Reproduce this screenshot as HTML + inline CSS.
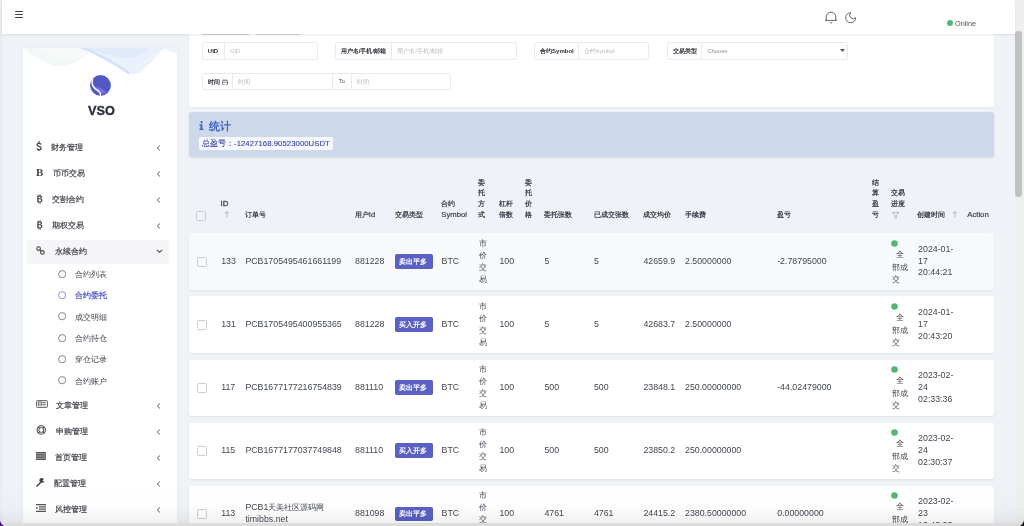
<!DOCTYPE html>
<html><head><meta charset="utf-8"><style>
html,body{margin:0;padding:0}
body{width:1024px;height:526px;overflow:hidden;position:relative;background:#eff2f6;font-family:'Liberation Sans', sans-serif}
.t{position:absolute;white-space:nowrap}
.b{position:absolute}
#root{position:absolute;left:0;top:0;width:1024px;height:526px;will-change:transform}
</style></head><body><div id="root">
<div class="b" style="left:0.00px;top:0.00px;width:2.00px;height:526.00px;background:#eaecef"></div>
<div class="b" style="left:2.00px;top:0.00px;width:1013.00px;height:34.00px;background:#fff;box-shadow:0 1px 2px rgba(30,40,60,0.10);z-index:5"></div>
<div class="b" style="left:14.90px;top:10.90px;width:8.30px;height:1.40px;background:#3c3c3c;border-radius:0.7px;z-index:6"></div>
<div class="b" style="left:14.90px;top:13.80px;width:8.30px;height:1.40px;background:#3c3c3c;border-radius:0.7px;z-index:6"></div>
<div class="b" style="left:14.90px;top:16.70px;width:8.30px;height:1.40px;background:#3c3c3c;border-radius:0.7px;z-index:6"></div>
<svg class="b" style="left:824px;top:11px;z-index:6" width="14" height="14" viewBox="0 0 14 14">
<path d="M2.2 9.4 V6 A4.8 4.8 0 0 1 11.8 6 V9.4" fill="none" stroke="#555" stroke-width="0.9"/>
<path d="M1 9.4 H13" stroke="#555" stroke-width="0.9"/>
<path d="M5.7 11.1 Q7 13.3 8.3 11.1" fill="none" stroke="#555" stroke-width="0.85"/>
</svg>
<svg class="b" style="left:844.3px;top:11.1px;z-index:6" width="13.4" height="13.4" viewBox="0 0 24 24">
<path d="M12 3a6 6 0 0 0 9 9 9 9 0 1 1-9-9Z" fill="none" stroke="#555" stroke-width="1.6" stroke-linejoin="round"/>
</svg>
<svg class="b" style="left:947px;top:20px;z-index:6" width="6" height="6" viewBox="0 0 6 6"><circle cx="3" cy="3" r="3" fill="#52b575"/></svg>
<div class="t" style="left:955.00px;top:18.65px;font-size:7.3px;line-height:9.49px;color:#555;font-weight:normal;z-index:6">Online</div>
<div class="b" style="left:1015.00px;top:0.00px;width:9.00px;height:526.00px;background:#efefef"></div>
<div class="b" style="left:1015.00px;top:30.80px;width:6.50px;height:166.70px;background:#c1c1c1;border-radius:3.2px"></div>
<div class="b" style="left:23.25px;top:48.00px;width:153.75px;height:490.00px;background:#fff;box-shadow:0 0 2px rgba(30,40,60,0.06)"></div>
<svg class="b" style="left:23px;top:48px" width="154" height="30" viewBox="0 0 154 30">
<defs><filter id="wb" x="-5%" y="-20%" width="110%" height="140%"><feGaussianBlur stdDeviation="0.7"/></filter><clipPath id="wc"><rect x="0" y="0" width="154" height="30"/></clipPath></defs>
<g clip-path="url(#wc)"><g filter="url(#wb)">
<path d="M-2 -2 C10 8 22 16 33 18 C45 19 55 14 66 5 L70 -2 Z" fill="#f1f8f6"/>
<path d="M15 0 C25 7 35 12 45 12 C55 12 62 7 68 0 Z" fill="#f6faf9"/>
<path d="M54 -2 C74 6 92 16 104 24 C108 26.5 112 27 116 24.5 C125 18 134 8 143 -2 Z" fill="#eaf1fc"/>
<path d="M58 -2 C76 4 90 9 102 10 C112 11 121 6 130 -2 Z" fill="#dde8f9" opacity="0.8"/>
<path d="M58 -1 C76 6 94 17 106.5 25.5" fill="none" stroke="#d3e2f8" stroke-width="2.6"/>
<path d="M112 21 C122 14 131 8 139 2" fill="none" stroke="#f9fbff" stroke-width="0.9"/>
<path d="M136 -2 C145 3 150 5 156 6 V-2 Z" fill="#eef4fc"/>
</g></g>
</svg>
<svg class="b" style="left:89.6px;top:74.6px" width="21" height="21" viewBox="0 0 21 21">
<circle cx="10.5" cy="10.5" r="10.4" fill="#5159c3"/>
<path d="M4 12 C7.5 12.2 12.5 12.8 16 17.6 C14.5 18.4 13 18.8 11.5 19 C10.5 16.5 8 15 4.6 14 Z" fill="#7d6ff0"/>
<path d="M2.6 4.3 C1.6 7.5 2.2 11 4.8 13.4 C7.4 15.6 10.8 16.3 10.4 20.2" fill="none" stroke="#fff" stroke-width="1.5" stroke-linecap="round"/>
</svg>
<div class="t" style="left:88.00px;top:102.95px;font-size:12.7px;line-height:16.51px;color:#2b303b;font-weight:bold;-webkit-text-stroke:0.35px #2b303b;letter-spacing:0.1px">VSO</div>
<svg class="b" style="left:36.3px;top:141px" width="6" height="10.4" viewBox="0 0 6 10.4"><path d="M4.9 3.4 C4.6 2.7 3.9 2.3 3 2.3 C1.8 2.3 1 2.9 1 3.8 C1 4.8 1.9 5.1 3 5.4 C4.2 5.7 5.1 6.1 5.1 7.2 C5.1 8.2 4.2 8.8 3 8.8 C2 8.8 1.2 8.4 0.9 7.6" fill="none" stroke="#444" stroke-width="1.3"/><path d="M3 0.1 V2.6 M3 8.5 V10.2" stroke="#444" stroke-width="1.1"/></svg>
<div class="t" style="left:50.60px;top:141.90px;font-size:8.3px;line-height:10.79px;color:#42454d;font-weight:normal;-webkit-text-stroke:0.2px #42454d">财务管理</div>
<svg class="b" style="left:156.1px;top:145.30px" width="5" height="6" viewBox="0 0 5 6"><path d="M3.9 0.6 L1.2 3 L3.9 5.4" fill="none" stroke="#555" stroke-width="0.95"/></svg>
<div class="t" style="left:36.0px;top:165.25px;font-size:11px;line-height:14.30px;color:#444;font-weight:bold;font-family:'Liberation Serif', serif">B</div>
<div class="t" style="left:53.00px;top:167.90px;font-size:8.3px;line-height:10.79px;color:#42454d;font-weight:normal;-webkit-text-stroke:0.2px #42454d">币币交易</div>
<svg class="b" style="left:156.1px;top:171.30px" width="5" height="6" viewBox="0 0 5 6"><path d="M3.9 0.6 L1.2 3 L3.9 5.4" fill="none" stroke="#555" stroke-width="0.95"/></svg>
<svg class="b" style="left:36.4px;top:194.3px" width="7" height="10" viewBox="0 0 7 10">
<path d="M1.2 1.6 H4.3 C5.6 1.6 6 2.4 6 3.1 C6 3.9 5.5 4.4 4.8 4.6 C5.8 4.8 6.4 5.4 6.4 6.3 C6.4 7.4 5.6 8.3 4.3 8.3 H1.2 Z M2.6 2.7 V4.2 H4 C4.5 4.2 4.7 3.9 4.7 3.45 C4.7 3 4.5 2.7 4 2.7 Z M2.6 5.2 V7.2 H4.2 C4.8 7.2 5.1 6.8 5.1 6.2 C5.1 5.6 4.8 5.2 4.2 5.2 Z" fill="#4a4a4a" fill-rule="evenodd"/>
<path d="M2.9 0.3 V1.8 M4.3 0.3 V1.8 M2.9 8.1 V9.7 M4.3 8.1 V9.7" stroke="#4a4a4a" stroke-width="0.8"/></svg>
<div class="t" style="left:52.00px;top:194.00px;font-size:8.3px;line-height:10.79px;color:#42454d;font-weight:normal;-webkit-text-stroke:0.2px #42454d">交割合约</div>
<svg class="b" style="left:156.1px;top:197.40px" width="5" height="6" viewBox="0 0 5 6"><path d="M3.9 0.6 L1.2 3 L3.9 5.4" fill="none" stroke="#555" stroke-width="0.95"/></svg>
<svg class="b" style="left:36.4px;top:220.3px" width="7" height="10" viewBox="0 0 7 10">
<path d="M1.2 1.6 H4.3 C5.6 1.6 6 2.4 6 3.1 C6 3.9 5.5 4.4 4.8 4.6 C5.8 4.8 6.4 5.4 6.4 6.3 C6.4 7.4 5.6 8.3 4.3 8.3 H1.2 Z M2.6 2.7 V4.2 H4 C4.5 4.2 4.7 3.9 4.7 3.45 C4.7 3 4.5 2.7 4 2.7 Z M2.6 5.2 V7.2 H4.2 C4.8 7.2 5.1 6.8 5.1 6.2 C5.1 5.6 4.8 5.2 4.2 5.2 Z" fill="#4a4a4a" fill-rule="evenodd"/>
<path d="M2.9 0.3 V1.8 M4.3 0.3 V1.8 M2.9 8.1 V9.7 M4.3 8.1 V9.7" stroke="#4a4a4a" stroke-width="0.8"/></svg>
<div class="t" style="left:52.00px;top:220.00px;font-size:8.3px;line-height:10.79px;color:#42454d;font-weight:normal;-webkit-text-stroke:0.2px #42454d">期权交易</div>
<svg class="b" style="left:156.1px;top:223.40px" width="5" height="6" viewBox="0 0 5 6"><path d="M3.9 0.6 L1.2 3 L3.9 5.4" fill="none" stroke="#555" stroke-width="0.95"/></svg>
<div class="b" style="left:27.00px;top:239.50px;width:142.00px;height:24.00px;background:#f5f5f8;border-radius:2px"></div>
<svg class="b" style="left:35.8px;top:245.8px" width="9" height="9" viewBox="0 0 9 9">
<circle cx="2.6" cy="2.6" r="1.8" fill="none" stroke="#444" stroke-width="1.1"/>
<circle cx="6.4" cy="6.4" r="1.8" fill="none" stroke="#444" stroke-width="1.1"/>
<path d="M3.8 3.8 L5.2 5.2" stroke="#444" stroke-width="1.1"/></svg>
<div class="t" style="left:54.50px;top:246.10px;font-size:8.3px;line-height:10.79px;color:#42454d;font-weight:normal;-webkit-text-stroke:0.2px #42454d">永续合约</div>
<svg class="b" style="left:155.5px;top:249.30px" width="7" height="4" viewBox="0 0 7 4"><path d="M0.8 0.8 L3.5 3.2 L6.2 0.8" fill="none" stroke="#555" stroke-width="1.1"/></svg>
<svg class="b" style="left:58.1px;top:269.70px" width="8.4" height="8.4" viewBox="0 0 8.4 8.4"><circle cx="4.2" cy="4.2" r="3.6" fill="none" stroke="#666a72" stroke-width="0.8"/></svg>
<div class="t" style="left:75.30px;top:269.01px;font-size:8.3px;line-height:10.79px;color:#42454d;font-weight:normal;">合约列表</div>
<svg class="b" style="left:58.1px;top:291.00px" width="8.4" height="8.4" viewBox="0 0 8.4 8.4"><circle cx="4.2" cy="4.2" r="3.6" fill="none" stroke="#6f74c9" stroke-width="0.8"/></svg>
<div class="t" style="left:75.30px;top:290.31px;font-size:8.3px;line-height:10.79px;color:#5b62c8;font-weight:bold;">合约委托</div>
<svg class="b" style="left:58.1px;top:312.30px" width="8.4" height="8.4" viewBox="0 0 8.4 8.4"><circle cx="4.2" cy="4.2" r="3.6" fill="none" stroke="#666a72" stroke-width="0.8"/></svg>
<div class="t" style="left:75.30px;top:311.61px;font-size:8.3px;line-height:10.79px;color:#42454d;font-weight:normal;">成交明细</div>
<svg class="b" style="left:58.1px;top:333.60px" width="8.4" height="8.4" viewBox="0 0 8.4 8.4"><circle cx="4.2" cy="4.2" r="3.6" fill="none" stroke="#666a72" stroke-width="0.8"/></svg>
<div class="t" style="left:75.30px;top:332.91px;font-size:8.3px;line-height:10.79px;color:#42454d;font-weight:normal;">合约持仓</div>
<svg class="b" style="left:58.1px;top:354.90px" width="8.4" height="8.4" viewBox="0 0 8.4 8.4"><circle cx="4.2" cy="4.2" r="3.6" fill="none" stroke="#666a72" stroke-width="0.8"/></svg>
<div class="t" style="left:75.30px;top:354.21px;font-size:8.3px;line-height:10.79px;color:#42454d;font-weight:normal;">穿仓记录</div>
<svg class="b" style="left:58.1px;top:376.20px" width="8.4" height="8.4" viewBox="0 0 8.4 8.4"><circle cx="4.2" cy="4.2" r="3.6" fill="none" stroke="#666a72" stroke-width="0.8"/></svg>
<div class="t" style="left:75.30px;top:375.51px;font-size:8.3px;line-height:10.79px;color:#42454d;font-weight:normal;">合约账户</div>
<svg class="b" style="left:36px;top:400px" width="12" height="8" viewBox="0 0 12 8">
<rect x="0.5" y="0.5" width="11" height="7" rx="1" fill="#ddd" stroke="#666" stroke-width="0.9"/>
<rect x="2.5" y="2" width="3" height="3" fill="none" stroke="#666" stroke-width="0.8"/>
<path d="M6.5 2.5 H9.5 M6.5 4.5 H9.5" stroke="#666" stroke-width="0.8"/></svg>
<div class="t" style="left:56.30px;top:399.81px;font-size:8.3px;line-height:10.79px;color:#42454d;font-weight:normal;-webkit-text-stroke:0.2px #42454d">文章管理</div>
<svg class="b" style="left:156.1px;top:403.20px" width="5" height="6" viewBox="0 0 5 6"><path d="M3.9 0.6 L1.2 3 L3.9 5.4" fill="none" stroke="#555" stroke-width="0.95"/></svg>
<svg class="b" style="left:36px;top:425px" width="10.5" height="10" viewBox="0 0 10 10">
<circle cx="5" cy="5" r="4.2" fill="none" stroke="#444" stroke-width="1.1"/>
<circle cx="5" cy="5" r="2.4" fill="none" stroke="#444" stroke-width="0.9"/>
<path d="M2 2 L3.3 3.3 M8 2 L6.7 3.3 M2 8 L3.3 6.7 M8 8 L6.7 6.7" stroke="#444" stroke-width="1.2"/></svg>
<div class="t" style="left:55.80px;top:425.81px;font-size:8.3px;line-height:10.79px;color:#42454d;font-weight:normal;-webkit-text-stroke:0.2px #42454d">申购管理</div>
<svg class="b" style="left:156.1px;top:429.20px" width="5" height="6" viewBox="0 0 5 6"><path d="M3.9 0.6 L1.2 3 L3.9 5.4" fill="none" stroke="#555" stroke-width="0.95"/></svg>
<svg class="b" style="left:36px;top:452px" width="10" height="8" viewBox="0 0 10 8">
<rect x="0" y="0" width="10" height="8" fill="#aaa"/>
<path d="M0 0.7 H10 M0 2.9 H10 M0 5.1 H10 M0 7.3 H10" stroke="#555" stroke-width="1.3"/></svg>
<div class="t" style="left:55.40px;top:451.81px;font-size:8.3px;line-height:10.79px;color:#42454d;font-weight:normal;-webkit-text-stroke:0.2px #42454d">首页管理</div>
<svg class="b" style="left:156.1px;top:455.20px" width="5" height="6" viewBox="0 0 5 6"><path d="M3.9 0.6 L1.2 3 L3.9 5.4" fill="none" stroke="#555" stroke-width="0.95"/></svg>
<svg class="b" style="left:36.4px;top:478px" width="9" height="9" viewBox="0 0 9 9">
<path d="M1 8 L5 4" stroke="#444" stroke-width="1.6" stroke-linecap="round"/>
<path d="M5.2 4.5 A2.3 2.3 0 1 1 7.8 1.5 L6.6 2.6 L6.8 3.3 L7.5 3.5 L8.6 2.4 A2.3 2.3 0 0 1 5.2 4.5Z" fill="#444"/></svg>
<div class="t" style="left:54.00px;top:477.81px;font-size:8.3px;line-height:10.79px;color:#42454d;font-weight:normal;-webkit-text-stroke:0.2px #42454d">配置管理</div>
<svg class="b" style="left:156.1px;top:481.20px" width="5" height="6" viewBox="0 0 5 6"><path d="M3.9 0.6 L1.2 3 L3.9 5.4" fill="none" stroke="#555" stroke-width="0.95"/></svg>
<svg class="b" style="left:36px;top:504px" width="10" height="8" viewBox="0 0 10 8">
<path d="M0 0.6 H10 M3 2.9 H10 M3 5.1 H10 M0 7.4 H10" stroke="#555" stroke-width="1.1"/>
<path d="M0.3 2.6 L2 4 L0.3 5.4 Z" fill="#555"/></svg>
<div class="t" style="left:55.25px;top:503.81px;font-size:8.3px;line-height:10.79px;color:#42454d;font-weight:normal;-webkit-text-stroke:0.2px #42454d">风控管理</div>
<svg class="b" style="left:156.1px;top:507.20px" width="5" height="6" viewBox="0 0 5 6"><path d="M3.9 0.6 L1.2 3 L3.9 5.4" fill="none" stroke="#555" stroke-width="0.95"/></svg>
<div class="b" style="left:189.00px;top:0.00px;width:805.00px;height:107.30px;background:#fff;border-radius:0 0 3px 3px;box-shadow:0 1px 2px rgba(30,40,60,0.05)"></div>
<div class="b" style="left:202.30px;top:33.70px;width:47.00px;height:1.30px;background:#cbcde6;z-index:4;box-shadow:0 0 1px #d5d7ea"></div>
<div class="b" style="left:255.60px;top:33.80px;width:45.00px;height:1.20px;background:#d6d7da;z-index:4;box-shadow:0 0 1px #dddee0"></div>
<div class="b" style="left:201.5px;top:42.2px;width:116px;height:17.6px;border:0.8px solid #e6eaef;border-radius:2.5px;box-sizing:border-box;background:#fff"></div>
<div class="t" style="left:207.80px;top:48.00px;font-size:6.0px;line-height:7.80px;color:#2d3038;font-weight:bold;">UID</div>
<div class="b" style="left:224.10px;top:42.20px;width:0.80px;height:17.60px;background:#e6eaef"></div>
<div class="t" style="left:230.30px;top:48.13px;font-size:5.8px;line-height:7.54px;color:#b4b8bf;font-weight:normal;">UID</div>
<div class="b" style="left:334.5px;top:42.2px;width:182px;height:17.6px;border:0.8px solid #e6eaef;border-radius:2.5px;box-sizing:border-box;background:#fff"></div>
<div class="t" style="left:340.80px;top:48.00px;font-size:6.0px;line-height:7.80px;color:#2d3038;font-weight:bold;">用户名/手机/邮箱</div>
<div class="b" style="left:391.10px;top:42.20px;width:0.80px;height:17.60px;background:#e6eaef"></div>
<div class="t" style="left:397.30px;top:48.13px;font-size:5.8px;line-height:7.54px;color:#b4b8bf;font-weight:normal;">用户名/手机/邮箱</div>
<div class="b" style="left:533.75px;top:42.2px;width:115.5px;height:17.6px;border:0.8px solid #e6eaef;border-radius:2.5px;box-sizing:border-box;background:#fff"></div>
<div class="t" style="left:540.05px;top:48.00px;font-size:6.0px;line-height:7.80px;color:#2d3038;font-weight:bold;">合约Symbol</div>
<div class="b" style="left:578.05px;top:42.20px;width:0.80px;height:17.60px;background:#e6eaef"></div>
<div class="t" style="left:584.25px;top:48.13px;font-size:5.8px;line-height:7.54px;color:#b4b8bf;font-weight:normal;">合约symbol</div>
<div class="b" style="left:666.6px;top:42.2px;width:181.9px;height:17.6px;border:0.8px solid #e6eaef;border-radius:2.5px;box-sizing:border-box;background:#fff"></div>
<div class="t" style="left:672.90px;top:48.00px;font-size:6.0px;line-height:7.80px;color:#2d3038;font-weight:bold;">交易类型</div>
<div class="b" style="left:701.20px;top:42.20px;width:0.80px;height:17.60px;background:#e6eaef"></div>
<div class="t" style="left:707.40px;top:48.03px;font-size:5.8px;line-height:7.54px;color:#8d9198;font-weight:normal;">Choose</div>
<svg class="b" style="left:839.8px;top:49px" width="5" height="3" viewBox="0 0 5 3"><path d="M0 0 H5 L2.5 3Z" fill="#555"/></svg>
<div class="b" style="left:201.5px;top:73.2px;width:249px;height:17.3px;border:0.8px solid #e6eaef;border-radius:2.5px;box-sizing:border-box;background:#fff"></div>
<div class="t" style="left:207.80px;top:78.85px;font-size:6.0px;line-height:7.80px;color:#2d3038;font-weight:bold;">时间</div>
<div class="b" style="left:232.10px;top:73.20px;width:0.80px;height:17.30px;background:#e6eaef"></div>
<div class="t" style="left:238.30px;top:78.98px;font-size:5.8px;line-height:7.54px;color:#b4b8bf;font-weight:normal;">时间</div>
<div class="b" style="left:332.10px;top:73.20px;width:0.80px;height:17.30px;background:#e6eaef"></div>
<div class="b" style="left:350.60px;top:73.20px;width:0.80px;height:17.30px;background:#e6eaef"></div>
<div class="t" style="left:356.80px;top:78.98px;font-size:5.8px;line-height:7.54px;color:#b4b8bf;font-weight:normal;">时间</div>
<div class="t" style="left:338.50px;top:78.10px;font-size:6.0px;line-height:7.80px;color:#555;font-weight:normal;">To</div>
<svg class="b" style="left:221.5px;top:78.6px" width="6" height="6.5" viewBox="0 0 6 6.5"><rect x="0.5" y="1.3" width="5" height="4.7" rx="0.8" fill="none" stroke="#666" stroke-width="0.8"/><path d="M0.5 3.2 H5.5 M1.8 0.3 V1.8 M4.2 0.3 V1.8" stroke="#666" stroke-width="0.7"/></svg>
<div class="b" style="left:189.00px;top:112.30px;width:805.00px;height:44.70px;background:#cdd8eb;border-radius:3px;box-shadow:0 1px 2px rgba(30,40,80,0.12)"></div>
<svg class="b" style="left:198.6px;top:121px" width="5" height="9" viewBox="0 0 5 9"><circle cx="2.6" cy="1.2" r="1.15" fill="#3f62c0"/><path d="M0.4 3.2 H3.4 V7.7 H4.5 V8.9 H0.4 V7.7 H1.5 V4.4 H0.4 Z" fill="#3f62c0"/></svg>
<div class="t" style="left:209.00px;top:118.68px;font-size:10.8px;line-height:14.04px;color:#4466c4;font-weight:bold;">统计</div>
<div class="b" style="left:198.80px;top:137.00px;width:134.20px;height:13.10px;background:#f7f8fc;border-radius:2px"></div>
<div class="t" style="left:202.00px;top:138.56px;font-size:7.75px;line-height:10.08px;color:#3644a8;font-weight:normal;-webkit-text-stroke:0.1px #3644a8">总盈亏：<span style="letter-spacing:0.05px">-12427168.90523000USDT</span></div>
<div class="b" style="left:196.3px;top:210.9px;width:10px;height:10px;border:1px solid #c8ced7;border-radius:1.5px;box-sizing:border-box;background:transparent"></div>
<div class="t" style="left:220.60px;top:199.27px;font-size:7.9px;line-height:10.27px;color:#3a3f4d;font-weight:normal;-webkit-text-stroke:0.3px #3a3f4d">ID</div>
<svg class="b" style="left:223.6px;top:211px" width="6" height="7" viewBox="0 0 6 7"><path d="M2.9 0.6 V6.6 M0.6 2.7 L2.9 0.5 L5.2 2.7" fill="none" stroke="#8e949c" stroke-width="0.6"/></svg>
<div class="t" style="left:245.40px;top:210.26px;font-size:7.45px;line-height:9.69px;color:#3a3f4d;font-weight:bold;">订单号</div>
<div class="t" style="left:354.80px;top:210.26px;font-size:7.45px;line-height:9.69px;color:#3a3f4d;font-weight:bold;">用户<span style="font-weight:normal;font-size:7.7px;-webkit-text-stroke:0.2px #3a3f4d">Id</span></div>
<div class="t" style="left:394.70px;top:210.26px;font-size:7.45px;line-height:9.69px;color:#3a3f4d;font-weight:bold;">交易类型</div>
<div class="t" style="left:441.25px;top:199.36px;font-size:7.45px;line-height:9.69px;color:#3a3f4d;font-weight:bold;">合约</div>
<div class="t" style="left:441.25px;top:210.26px;font-size:7.45px;line-height:9.69px;color:#3a3f4d;font-weight:bold;"><span style="font-weight:normal;font-size:7.7px;-webkit-text-stroke:0.2px #3a3f4d">Symbol</span></div>
<div class="t" style="left:478.30px;top:177.56px;font-size:7.45px;line-height:9.69px;color:#3a3f4d;font-weight:bold;">委</div>
<div class="t" style="left:478.30px;top:188.46px;font-size:7.45px;line-height:9.69px;color:#3a3f4d;font-weight:bold;">托</div>
<div class="t" style="left:478.30px;top:199.36px;font-size:7.45px;line-height:9.69px;color:#3a3f4d;font-weight:bold;">方</div>
<div class="t" style="left:478.30px;top:210.26px;font-size:7.45px;line-height:9.69px;color:#3a3f4d;font-weight:bold;">式</div>
<div class="t" style="left:498.90px;top:199.36px;font-size:7.45px;line-height:9.69px;color:#3a3f4d;font-weight:bold;">杠杆</div>
<div class="t" style="left:498.90px;top:210.26px;font-size:7.45px;line-height:9.69px;color:#3a3f4d;font-weight:bold;">倍数</div>
<div class="t" style="left:524.70px;top:177.56px;font-size:7.45px;line-height:9.69px;color:#3a3f4d;font-weight:bold;">委</div>
<div class="t" style="left:524.70px;top:188.46px;font-size:7.45px;line-height:9.69px;color:#3a3f4d;font-weight:bold;">托</div>
<div class="t" style="left:524.70px;top:199.36px;font-size:7.45px;line-height:9.69px;color:#3a3f4d;font-weight:bold;">价</div>
<div class="t" style="left:524.70px;top:210.26px;font-size:7.45px;line-height:9.69px;color:#3a3f4d;font-weight:bold;">格</div>
<div class="t" style="left:543.90px;top:210.26px;font-size:7.45px;line-height:9.69px;color:#3a3f4d;font-weight:bold;">委托张数</div>
<div class="t" style="left:593.90px;top:210.26px;font-size:7.45px;line-height:9.69px;color:#3a3f4d;font-weight:bold;">已成交张数</div>
<div class="t" style="left:643.10px;top:210.26px;font-size:7.45px;line-height:9.69px;color:#3a3f4d;font-weight:bold;">成交均价</div>
<div class="t" style="left:685.00px;top:210.26px;font-size:7.45px;line-height:9.69px;color:#3a3f4d;font-weight:bold;">手续费</div>
<div class="t" style="left:776.70px;top:210.26px;font-size:7.45px;line-height:9.69px;color:#3a3f4d;font-weight:bold;">盈亏</div>
<div class="t" style="left:872.30px;top:177.56px;font-size:7.45px;line-height:9.69px;color:#3a3f4d;font-weight:bold;">结</div>
<div class="t" style="left:872.30px;top:188.46px;font-size:7.45px;line-height:9.69px;color:#3a3f4d;font-weight:bold;">算</div>
<div class="t" style="left:872.30px;top:199.36px;font-size:7.45px;line-height:9.69px;color:#3a3f4d;font-weight:bold;">盈</div>
<div class="t" style="left:872.30px;top:210.26px;font-size:7.45px;line-height:9.69px;color:#3a3f4d;font-weight:bold;">亏</div>
<div class="t" style="left:891.20px;top:187.66px;font-size:7.45px;line-height:9.69px;color:#3a3f4d;font-weight:bold;">交易</div>
<div class="t" style="left:891.20px;top:198.56px;font-size:7.45px;line-height:9.69px;color:#3a3f4d;font-weight:bold;">进度</div>
<svg class="b" style="left:891.5px;top:211.5px" width="7.5" height="7" viewBox="0 0 7.5 7"><path d="M0.5 0.5 H7 L4.4 3.6 V6.5 L3.1 5.8 V3.6 Z" fill="none" stroke="#a0a5ad" stroke-width="0.7"/></svg>
<div class="t" style="left:917.40px;top:210.26px;font-size:7.45px;line-height:9.69px;color:#3a3f4d;font-weight:bold;">创建时间</div>
<svg class="b" style="left:951.8px;top:211px" width="6" height="7" viewBox="0 0 6 7"><path d="M2.9 0.6 V6.6 M0.6 2.7 L2.9 0.5 L5.2 2.7" fill="none" stroke="#8e949c" stroke-width="0.6"/></svg>
<div class="t" style="left:967.30px;top:210.26px;font-size:7.45px;line-height:9.69px;color:#3a3f4d;font-weight:bold;"><span style="font-weight:normal;font-size:7.7px;-webkit-text-stroke:0.2px #3a3f4d">Action</span></div>
<div class="b" style="left:189.00px;top:233.40px;width:805.00px;height:56.20px;background:#f8f9fb;border-radius:3px;box-shadow:0 1px 2px rgba(30,40,60,0.08)"></div>
<div class="b" style="left:197.2px;top:256.5px;width:10px;height:10px;border:1px solid #c8ced7;border-radius:1.5px;box-sizing:border-box;background:transparent"></div>
<div class="t" style="left:221.20px;top:255.78px;font-size:8.8px;line-height:11.44px;color:#424753;font-weight:normal;">133</div>
<div class="t" style="left:245.40px;top:255.78px;font-size:8.8px;line-height:11.44px;color:#424753;font-weight:normal;">PCB1705495461661199</div>
<div class="t" style="left:355.00px;top:255.78px;font-size:8.8px;line-height:11.44px;color:#424753;font-weight:normal;">881228</div>
<div class="b" style="left:394.75px;top:254.30px;width:38.10px;height:14.40px;background:#5a60c4;border-radius:1.8px"></div>
<div class="t" style="left:398.60px;top:256.69px;font-size:7.4px;line-height:9.62px;color:#fff;font-weight:bold;letter-spacing:0.3px">卖出平多</div>
<div class="t" style="left:441.60px;top:255.78px;font-size:8.8px;line-height:11.44px;color:#424753;font-weight:normal;">BTC</div>
<div class="t" style="left:478.60px;top:238.74px;font-size:8.1px;line-height:10.53px;color:#424753;font-weight:normal;">市</div>
<div class="t" style="left:478.60px;top:250.74px;font-size:8.1px;line-height:10.53px;color:#424753;font-weight:normal;">价</div>
<div class="t" style="left:478.60px;top:262.74px;font-size:8.1px;line-height:10.53px;color:#424753;font-weight:normal;">交</div>
<div class="t" style="left:478.60px;top:274.74px;font-size:8.1px;line-height:10.53px;color:#424753;font-weight:normal;">易</div>
<div class="t" style="left:499.40px;top:255.78px;font-size:8.8px;line-height:11.44px;color:#424753;font-weight:normal;">100</div>
<div class="t" style="left:544.40px;top:255.78px;font-size:8.8px;line-height:11.44px;color:#424753;font-weight:normal;">5</div>
<div class="t" style="left:593.90px;top:255.78px;font-size:8.8px;line-height:11.44px;color:#424753;font-weight:normal;">5</div>
<div class="t" style="left:643.40px;top:255.78px;font-size:8.8px;line-height:11.44px;color:#424753;font-weight:normal;">42659.9</div>
<div class="t" style="left:685.00px;top:255.78px;font-size:8.8px;line-height:11.44px;color:#424753;font-weight:normal;">2.50000000</div>
<div class="t" style="left:777.20px;top:255.78px;font-size:8.8px;line-height:11.44px;color:#424753;font-weight:normal;">-2.78795000</div>
<svg class="b" style="left:891.2px;top:239.70px" width="7" height="7" viewBox="0 0 7 7"><circle cx="3.5" cy="3.5" r="3.3" fill="#52b575"/></svg>
<div class="t" style="left:896.00px;top:249.64px;font-size:8.1px;line-height:10.53px;color:#424753;font-weight:normal;">全</div>
<div class="t" style="left:891.50px;top:262.54px;font-size:8.1px;line-height:10.53px;color:#424753;font-weight:normal;">部成</div>
<div class="t" style="left:891.50px;top:275.13px;font-size:8.1px;line-height:10.53px;color:#424753;font-weight:normal;">交</div>
<div class="t" style="left:918.10px;top:244.28px;font-size:8.8px;line-height:11.44px;color:#424753;font-weight:normal;">2024-01-</div>
<div class="t" style="left:918.10px;top:255.88px;font-size:8.8px;line-height:11.44px;color:#424753;font-weight:normal;">17</div>
<div class="t" style="left:918.10px;top:267.48px;font-size:8.8px;line-height:11.44px;color:#424753;font-weight:normal;">20:44:21</div>
<div class="b" style="left:189.00px;top:296.45px;width:805.00px;height:56.20px;background:#fff;border-radius:3px;box-shadow:0 1px 2px rgba(30,40,60,0.08)"></div>
<div class="b" style="left:197.2px;top:319.55px;width:10px;height:10px;border:1px solid #c8ced7;border-radius:1.5px;box-sizing:border-box;background:transparent"></div>
<div class="t" style="left:221.20px;top:318.83px;font-size:8.8px;line-height:11.44px;color:#424753;font-weight:normal;">131</div>
<div class="t" style="left:245.40px;top:318.83px;font-size:8.8px;line-height:11.44px;color:#424753;font-weight:normal;">PCB1705495400955365</div>
<div class="t" style="left:355.00px;top:318.83px;font-size:8.8px;line-height:11.44px;color:#424753;font-weight:normal;">881228</div>
<div class="b" style="left:394.75px;top:317.35px;width:38.10px;height:14.40px;background:#5a60c4;border-radius:1.8px"></div>
<div class="t" style="left:398.60px;top:319.74px;font-size:7.4px;line-height:9.62px;color:#fff;font-weight:bold;letter-spacing:0.3px">买入开多</div>
<div class="t" style="left:441.60px;top:318.83px;font-size:8.8px;line-height:11.44px;color:#424753;font-weight:normal;">BTC</div>
<div class="t" style="left:478.60px;top:301.79px;font-size:8.1px;line-height:10.53px;color:#424753;font-weight:normal;">市</div>
<div class="t" style="left:478.60px;top:313.79px;font-size:8.1px;line-height:10.53px;color:#424753;font-weight:normal;">价</div>
<div class="t" style="left:478.60px;top:325.79px;font-size:8.1px;line-height:10.53px;color:#424753;font-weight:normal;">交</div>
<div class="t" style="left:478.60px;top:337.79px;font-size:8.1px;line-height:10.53px;color:#424753;font-weight:normal;">易</div>
<div class="t" style="left:499.40px;top:318.83px;font-size:8.8px;line-height:11.44px;color:#424753;font-weight:normal;">100</div>
<div class="t" style="left:544.40px;top:318.83px;font-size:8.8px;line-height:11.44px;color:#424753;font-weight:normal;">5</div>
<div class="t" style="left:593.90px;top:318.83px;font-size:8.8px;line-height:11.44px;color:#424753;font-weight:normal;">5</div>
<div class="t" style="left:643.40px;top:318.83px;font-size:8.8px;line-height:11.44px;color:#424753;font-weight:normal;">42683.7</div>
<div class="t" style="left:685.00px;top:318.83px;font-size:8.8px;line-height:11.44px;color:#424753;font-weight:normal;">2.50000000</div>
<svg class="b" style="left:891.2px;top:302.75px" width="7" height="7" viewBox="0 0 7 7"><circle cx="3.5" cy="3.5" r="3.3" fill="#52b575"/></svg>
<div class="t" style="left:896.00px;top:312.69px;font-size:8.1px;line-height:10.53px;color:#424753;font-weight:normal;">全</div>
<div class="t" style="left:891.50px;top:325.59px;font-size:8.1px;line-height:10.53px;color:#424753;font-weight:normal;">部成</div>
<div class="t" style="left:891.50px;top:338.19px;font-size:8.1px;line-height:10.53px;color:#424753;font-weight:normal;">交</div>
<div class="t" style="left:918.10px;top:307.33px;font-size:8.8px;line-height:11.44px;color:#424753;font-weight:normal;">2024-01-</div>
<div class="t" style="left:918.10px;top:318.93px;font-size:8.8px;line-height:11.44px;color:#424753;font-weight:normal;">17</div>
<div class="t" style="left:918.10px;top:330.53px;font-size:8.8px;line-height:11.44px;color:#424753;font-weight:normal;">20:43:20</div>
<div class="b" style="left:189.00px;top:359.50px;width:805.00px;height:56.20px;background:#fff;border-radius:3px;box-shadow:0 1px 2px rgba(30,40,60,0.08)"></div>
<div class="b" style="left:197.2px;top:382.6px;width:10px;height:10px;border:1px solid #c8ced7;border-radius:1.5px;box-sizing:border-box;background:transparent"></div>
<div class="t" style="left:221.20px;top:381.88px;font-size:8.8px;line-height:11.44px;color:#424753;font-weight:normal;">117</div>
<div class="t" style="left:245.40px;top:381.88px;font-size:8.8px;line-height:11.44px;color:#424753;font-weight:normal;">PCB1677177216754839</div>
<div class="t" style="left:355.00px;top:381.88px;font-size:8.8px;line-height:11.44px;color:#424753;font-weight:normal;">881110</div>
<div class="b" style="left:394.75px;top:380.40px;width:38.10px;height:14.40px;background:#5a60c4;border-radius:1.8px"></div>
<div class="t" style="left:398.60px;top:382.79px;font-size:7.4px;line-height:9.62px;color:#fff;font-weight:bold;letter-spacing:0.3px">卖出平多</div>
<div class="t" style="left:441.60px;top:381.88px;font-size:8.8px;line-height:11.44px;color:#424753;font-weight:normal;">BTC</div>
<div class="t" style="left:478.60px;top:364.84px;font-size:8.1px;line-height:10.53px;color:#424753;font-weight:normal;">市</div>
<div class="t" style="left:478.60px;top:376.84px;font-size:8.1px;line-height:10.53px;color:#424753;font-weight:normal;">价</div>
<div class="t" style="left:478.60px;top:388.84px;font-size:8.1px;line-height:10.53px;color:#424753;font-weight:normal;">交</div>
<div class="t" style="left:478.60px;top:400.84px;font-size:8.1px;line-height:10.53px;color:#424753;font-weight:normal;">易</div>
<div class="t" style="left:499.40px;top:381.88px;font-size:8.8px;line-height:11.44px;color:#424753;font-weight:normal;">100</div>
<div class="t" style="left:544.40px;top:381.88px;font-size:8.8px;line-height:11.44px;color:#424753;font-weight:normal;">500</div>
<div class="t" style="left:593.90px;top:381.88px;font-size:8.8px;line-height:11.44px;color:#424753;font-weight:normal;">500</div>
<div class="t" style="left:643.40px;top:381.88px;font-size:8.8px;line-height:11.44px;color:#424753;font-weight:normal;">23848.1</div>
<div class="t" style="left:685.00px;top:381.88px;font-size:8.8px;line-height:11.44px;color:#424753;font-weight:normal;">250.00000000</div>
<div class="t" style="left:777.20px;top:381.88px;font-size:8.8px;line-height:11.44px;color:#424753;font-weight:normal;">-44.02479000</div>
<svg class="b" style="left:891.2px;top:365.80px" width="7" height="7" viewBox="0 0 7 7"><circle cx="3.5" cy="3.5" r="3.3" fill="#52b575"/></svg>
<div class="t" style="left:896.00px;top:375.74px;font-size:8.1px;line-height:10.53px;color:#424753;font-weight:normal;">全</div>
<div class="t" style="left:891.50px;top:388.64px;font-size:8.1px;line-height:10.53px;color:#424753;font-weight:normal;">部成</div>
<div class="t" style="left:891.50px;top:401.24px;font-size:8.1px;line-height:10.53px;color:#424753;font-weight:normal;">交</div>
<div class="t" style="left:918.10px;top:370.38px;font-size:8.8px;line-height:11.44px;color:#424753;font-weight:normal;">2023-02-</div>
<div class="t" style="left:918.10px;top:381.98px;font-size:8.8px;line-height:11.44px;color:#424753;font-weight:normal;">24</div>
<div class="t" style="left:918.10px;top:393.58px;font-size:8.8px;line-height:11.44px;color:#424753;font-weight:normal;">02:33:36</div>
<div class="b" style="left:189.00px;top:422.55px;width:805.00px;height:56.20px;background:#fff;border-radius:3px;box-shadow:0 1px 2px rgba(30,40,60,0.08)"></div>
<div class="b" style="left:197.2px;top:445.65px;width:10px;height:10px;border:1px solid #c8ced7;border-radius:1.5px;box-sizing:border-box;background:transparent"></div>
<div class="t" style="left:221.20px;top:444.93px;font-size:8.8px;line-height:11.44px;color:#424753;font-weight:normal;">115</div>
<div class="t" style="left:245.40px;top:444.93px;font-size:8.8px;line-height:11.44px;color:#424753;font-weight:normal;">PCB1677177037749848</div>
<div class="t" style="left:355.00px;top:444.93px;font-size:8.8px;line-height:11.44px;color:#424753;font-weight:normal;">881110</div>
<div class="b" style="left:394.75px;top:443.45px;width:38.10px;height:14.40px;background:#5a60c4;border-radius:1.8px"></div>
<div class="t" style="left:398.60px;top:445.84px;font-size:7.4px;line-height:9.62px;color:#fff;font-weight:bold;letter-spacing:0.3px">买入开多</div>
<div class="t" style="left:441.60px;top:444.93px;font-size:8.8px;line-height:11.44px;color:#424753;font-weight:normal;">BTC</div>
<div class="t" style="left:478.60px;top:427.88px;font-size:8.1px;line-height:10.53px;color:#424753;font-weight:normal;">市</div>
<div class="t" style="left:478.60px;top:439.88px;font-size:8.1px;line-height:10.53px;color:#424753;font-weight:normal;">价</div>
<div class="t" style="left:478.60px;top:451.88px;font-size:8.1px;line-height:10.53px;color:#424753;font-weight:normal;">交</div>
<div class="t" style="left:478.60px;top:463.88px;font-size:8.1px;line-height:10.53px;color:#424753;font-weight:normal;">易</div>
<div class="t" style="left:499.40px;top:444.93px;font-size:8.8px;line-height:11.44px;color:#424753;font-weight:normal;">100</div>
<div class="t" style="left:544.40px;top:444.93px;font-size:8.8px;line-height:11.44px;color:#424753;font-weight:normal;">500</div>
<div class="t" style="left:593.90px;top:444.93px;font-size:8.8px;line-height:11.44px;color:#424753;font-weight:normal;">500</div>
<div class="t" style="left:643.40px;top:444.93px;font-size:8.8px;line-height:11.44px;color:#424753;font-weight:normal;">23850.2</div>
<div class="t" style="left:685.00px;top:444.93px;font-size:8.8px;line-height:11.44px;color:#424753;font-weight:normal;">250.00000000</div>
<svg class="b" style="left:891.2px;top:428.85px" width="7" height="7" viewBox="0 0 7 7"><circle cx="3.5" cy="3.5" r="3.3" fill="#52b575"/></svg>
<div class="t" style="left:896.00px;top:438.78px;font-size:8.1px;line-height:10.53px;color:#424753;font-weight:normal;">全</div>
<div class="t" style="left:891.50px;top:451.69px;font-size:8.1px;line-height:10.53px;color:#424753;font-weight:normal;">部成</div>
<div class="t" style="left:891.50px;top:464.28px;font-size:8.1px;line-height:10.53px;color:#424753;font-weight:normal;">交</div>
<div class="t" style="left:918.10px;top:433.43px;font-size:8.8px;line-height:11.44px;color:#424753;font-weight:normal;">2023-02-</div>
<div class="t" style="left:918.10px;top:445.03px;font-size:8.8px;line-height:11.44px;color:#424753;font-weight:normal;">24</div>
<div class="t" style="left:918.10px;top:456.63px;font-size:8.8px;line-height:11.44px;color:#424753;font-weight:normal;">02:30:37</div>
<div class="b" style="left:189.00px;top:485.60px;width:805.00px;height:56.20px;background:#fff;border-radius:3px;box-shadow:0 1px 2px rgba(30,40,60,0.08)"></div>
<div class="b" style="left:197.2px;top:508.70000000000005px;width:10px;height:10px;border:1px solid #c8ced7;border-radius:1.5px;box-sizing:border-box;background:transparent"></div>
<div class="t" style="left:221.20px;top:507.98px;font-size:8.8px;line-height:11.44px;color:#424753;font-weight:normal;">113</div>
<div class="t" style="left:245.40px;top:502.08px;font-size:8.8px;line-height:11.44px;color:#424753;font-weight:normal;">PCB1<span style="font-size:8.1px">天美社区源码网</span></div>
<div class="t" style="left:245.40px;top:513.88px;font-size:8.8px;line-height:11.44px;color:#424753;font-weight:normal;">timibbs.net</div>
<div class="t" style="left:355.00px;top:507.98px;font-size:8.8px;line-height:11.44px;color:#424753;font-weight:normal;">881098</div>
<div class="b" style="left:394.75px;top:506.50px;width:38.10px;height:14.40px;background:#5a60c4;border-radius:1.8px"></div>
<div class="t" style="left:398.60px;top:508.89px;font-size:7.4px;line-height:9.62px;color:#fff;font-weight:bold;letter-spacing:0.3px">卖出平多</div>
<div class="t" style="left:441.60px;top:507.98px;font-size:8.8px;line-height:11.44px;color:#424753;font-weight:normal;">BTC</div>
<div class="t" style="left:478.60px;top:490.94px;font-size:8.1px;line-height:10.53px;color:#424753;font-weight:normal;">市</div>
<div class="t" style="left:478.60px;top:502.94px;font-size:8.1px;line-height:10.53px;color:#424753;font-weight:normal;">价</div>
<div class="t" style="left:478.60px;top:514.94px;font-size:8.1px;line-height:10.53px;color:#424753;font-weight:normal;">交</div>
<div class="t" style="left:478.60px;top:526.94px;font-size:8.1px;line-height:10.53px;color:#424753;font-weight:normal;">易</div>
<div class="t" style="left:499.40px;top:507.98px;font-size:8.8px;line-height:11.44px;color:#424753;font-weight:normal;">100</div>
<div class="t" style="left:544.40px;top:507.98px;font-size:8.8px;line-height:11.44px;color:#424753;font-weight:normal;">4761</div>
<div class="t" style="left:593.90px;top:507.98px;font-size:8.8px;line-height:11.44px;color:#424753;font-weight:normal;">4761</div>
<div class="t" style="left:643.40px;top:507.98px;font-size:8.8px;line-height:11.44px;color:#424753;font-weight:normal;">24415.2</div>
<div class="t" style="left:685.00px;top:507.98px;font-size:8.8px;line-height:11.44px;color:#424753;font-weight:normal;">2380.50000000</div>
<div class="t" style="left:777.20px;top:507.98px;font-size:8.8px;line-height:11.44px;color:#424753;font-weight:normal;">0.00000000</div>
<svg class="b" style="left:891.2px;top:491.90px" width="7" height="7" viewBox="0 0 7 7"><circle cx="3.5" cy="3.5" r="3.3" fill="#52b575"/></svg>
<div class="t" style="left:896.00px;top:501.84px;font-size:8.1px;line-height:10.53px;color:#424753;font-weight:normal;">全</div>
<div class="t" style="left:891.50px;top:514.74px;font-size:8.1px;line-height:10.53px;color:#424753;font-weight:normal;">部成</div>
<div class="t" style="left:891.50px;top:527.34px;font-size:8.1px;line-height:10.53px;color:#424753;font-weight:normal;">交</div>
<div class="t" style="left:918.10px;top:496.48px;font-size:8.8px;line-height:11.44px;color:#424753;font-weight:normal;">2023-02-</div>
<div class="t" style="left:918.10px;top:508.08px;font-size:8.8px;line-height:11.44px;color:#424753;font-weight:normal;">23</div>
<div class="t" style="left:918.10px;top:519.68px;font-size:8.8px;line-height:11.44px;color:#424753;font-weight:normal;">13:43:03</div>
<div class="b" style="left:0.00px;top:488.00px;width:1024.00px;height:34.50px;background:linear-gradient(rgba(0,0,0,0),rgba(0,0,0,0.012) 60%,rgba(0,0,0,0.06));z-index:20"></div>
<div class="b" style="left:0.00px;top:522.50px;width:1024.00px;height:3.50px;background:#dcdcdc;z-index:20"></div>
<svg class="b" style="left:0;top:519px;z-index:21" width="6" height="7" viewBox="0 0 6 7"><path d="M0 0 V7 H5 C2.5 6.5 0.8 4 0 0 Z" fill="#4a1470"/><path d="M0.2 0.5 C1 4.2 2.6 6.2 5 6.8" fill="none" stroke="#f6f6f8" stroke-width="0.7"/></svg>
<svg class="b" style="left:1018px;top:519px;z-index:21" width="6" height="7" viewBox="0 0 6 7"><path d="M6 0 V7 H1 C3.5 6.5 5.2 4 6 0 Z" fill="#151515"/><path d="M5.8 0.5 C5 4.2 3.4 6.2 1 6.8" fill="none" stroke="#f6f6f8" stroke-width="0.7"/></svg>
</div></body></html>
